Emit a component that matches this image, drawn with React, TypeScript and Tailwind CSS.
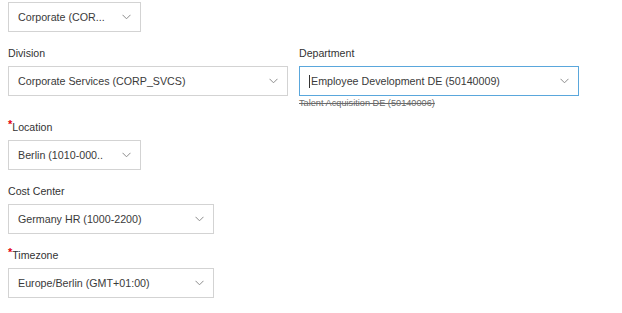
import React from 'react';

const Chevron: React.FC = () => (
    <svg width="9" height="6" viewBox="0 0 9 6" fill="none" className="shrink-0">
        <path d="M0.5 0.8 L4.5 4.8 L8.5 0.8" stroke="#8c8c8c" strokeWidth="1" />
    </svg>
);

const Select: React.FC<{ value: string; width: string; focused?: boolean }> = ({ value, width, focused }) => (
    <div
        className={`${width} h-[30px] flex items-center justify-between pl-[9px] pr-[9px] bg-white border ${
            focused ? 'border-[#5aa7dc]' : 'border-[#d3d3d3]'
        }`}
    >
        <div className="flex items-center min-w-0 pt-px">
            {focused && <span className="w-px h-[13px] bg-[#333] mr-px" />}
            <span className="truncate text-[10.7px] text-[#3a3a3a]">{value}</span>
        </div>
        <Chevron />
    </div>
);

const Label: React.FC<{ text: string; required?: boolean }> = ({ text, required }) => (
    <div className="h-[16px] leading-[16px] text-[10.6px] text-[#333] mb-[5px] flex">
        {required && <span className="text-[#e3000f] text-[11px] leading-[10px] font-bold">*</span>}
        <span>{text}</span>
    </div>
);

export default function App() {
    return (
        <div className="w-[622px] h-[313px] bg-white pl-[8px] pt-[2px] flex flex-col font-['Liberation_Sans',Arial,sans-serif]">
            <Select value="Corporate (COR..." width="w-[133px]" />

            <div className="flex gap-[11px] items-start mt-[13px]">
                <div className="flex flex-col">
                    <Label text="Division" />
                    <Select value="Corporate Services (CORP_SVCS)" width="w-[280px]" />
                </div>
                <div className="flex flex-col">
                    <Label text="Department" />
                    <Select value="Employee Development DE (50140009)" width="w-[280px]" focused />
                    <div className="h-[10px] leading-[10px] mt-[2px] text-[9.2px] text-[#6a6a6a] line-through">
                        Talent Acquisition DE (50140006)
                    </div>
                </div>
            </div>

            <div className="flex flex-col mt-[11px]">
                <Label text="Location" required />
                <Select value="Berlin (1010-000.." width="w-[133px]" />
            </div>

            <div className="flex flex-col mt-[13px]">
                <Label text="Cost Center" />
                <Select value="Germany HR (1000-2200)" width="w-[206px]" />
            </div>

            <div className="flex flex-col mt-[13px]">
                <Label text="Timezone" required />
                <Select value="Europe/Berlin (GMT+01:00)" width="w-[206px]" />
            </div>
        </div>
    );
}
